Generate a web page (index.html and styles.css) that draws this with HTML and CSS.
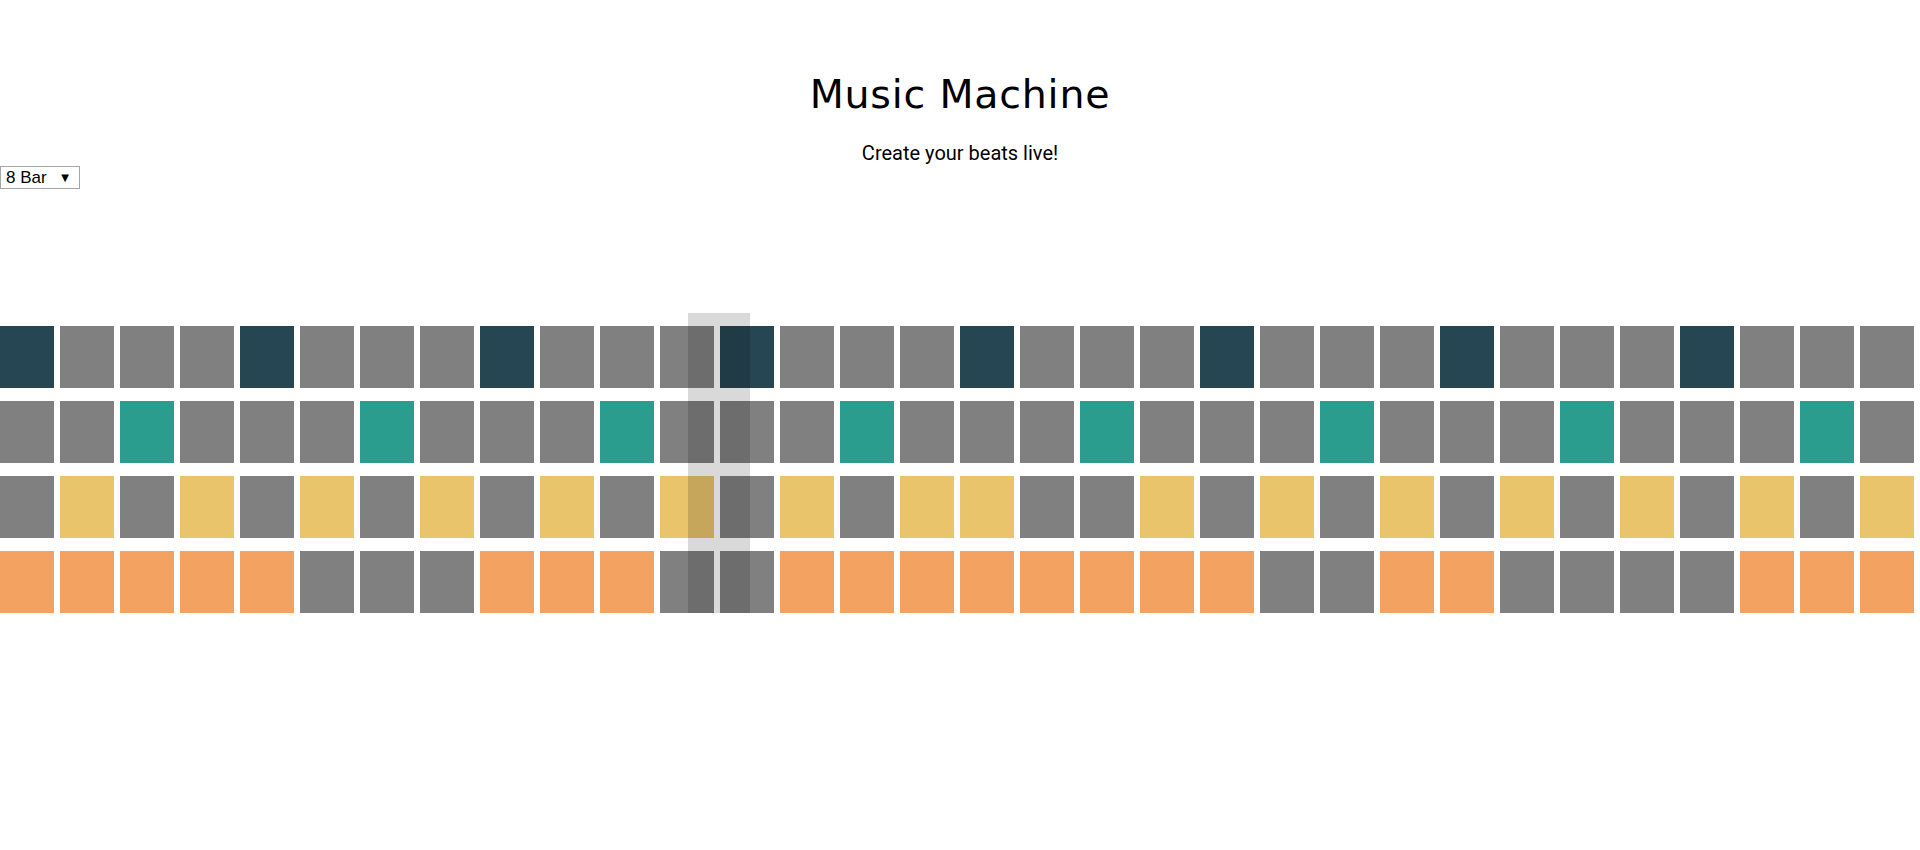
FILE: index.html
```html
<!DOCTYPE html>
<html lang="en">
<head>
<meta charset="utf-8">
<title>Music Machine</title>
<link rel="stylesheet" href="styles.css">
</head>
<body>
<header class="header">
  <h1 class="title">Music Machine</h1>
  <p class="subtitle">Create your beats live!</p>
</header>
<div class="controls">
  <div class="select-wrap">
    <select class="bars">
      <option>8 Bar</option>
      <option>4 Bar</option>
      <option>16 Bar</option>
    </select>
    <span class="select-arrow">&#9660;</span>
  </div>
</div>
<main class="machine" id="machine">
  <div class="playhead" style="left: 688px;"></div>
</main>
<script>
(function(){
  var rows = [
    {cls:'kick',  on:[0,4,8,12,16,20,24,28]},
    {cls:'snare', on:[2,6,10,14,18,22,26,30]},
    {cls:'hat',   on:[1,3,5,7,9,11,13,15,16,19,21,23,25,27,29,31]},
    {cls:'perc',  on:[0,1,2,3,4,8,9,10,13,14,15,16,17,18,19,20,23,24,29,30,31]}
  ];
  var m = document.getElementById('machine');
  var ph = m.querySelector('.playhead');
  rows.forEach(function(r){
    var row = document.createElement('div');
    row.className = 'row';
    for (var i = 0; i < 32; i++) {
      var c = document.createElement('div');
      c.className = 'cell' + (r.on.indexOf(i) >= 0 ? ' on ' + r.cls : '');
      row.appendChild(c);
    }
    m.insertBefore(row, ph);
  });
})();
</script>
</body>
</html>
```
FILE: styles.css
```css
html, body {
  margin: 0;
  padding: 0;
  background: #ffffff;
}

body {
  font-family: Roboto, "Liberation Sans", sans-serif;
  color: #000;
}

.header {
  text-align: center;
  padding-top: 69px;
}

.title {
  margin: 0;
  font-family: "DejaVu Sans", sans-serif;
  font-weight: 400;
  font-size: 39.5px;
  line-height: 50px;
  letter-spacing: 0.8px;
}

.subtitle {
  margin: 22px 0 0;
  font-size: 20px;
  line-height: 24px;
}

.controls {
  display: flex;
  margin-top: 1px;
}

.select-wrap {
  position: relative;
  width: 80px;
  height: 23px;
}

.bars {
  -webkit-appearance: none;
  appearance: none;
  width: 80px;
  height: 23px;
  margin: 0;
  padding: 0 0 0 5px;
  border: 1px solid #a6a6a6;
  border-radius: 0;
  background: #fff;
  color: #000;
  font-family: "Liberation Sans", Arial, sans-serif;
  font-size: 17px;
  line-height: 21px;
}

.select-arrow {
  position: absolute;
  right: 11px;
  top: 6px;
  font-family: "DejaVu Sans", sans-serif;
  font-size: 10px;
  line-height: 11px;
  color: #000;
  pointer-events: none;
}

.machine {
  position: relative;
  margin-top: 124px;
}

.row {
  display: flex;
  padding-top: 13px;
}

.cell {
  flex: 0 0 auto;
  width: 54px;
  height: 62px;
  margin-right: 6px;
  background: #808080;
}

.cell.kick  { background: #264653; }
.cell.snare { background: #2a9d8f; }
.cell.hat   { background: #e9c46a; }
.cell.perc  { background: #f4a261; }

.playhead {
  position: absolute;
  top: 0;
  width: 62px;
  height: 300px;
  background: rgba(0, 0, 0, 0.15);
}
```
